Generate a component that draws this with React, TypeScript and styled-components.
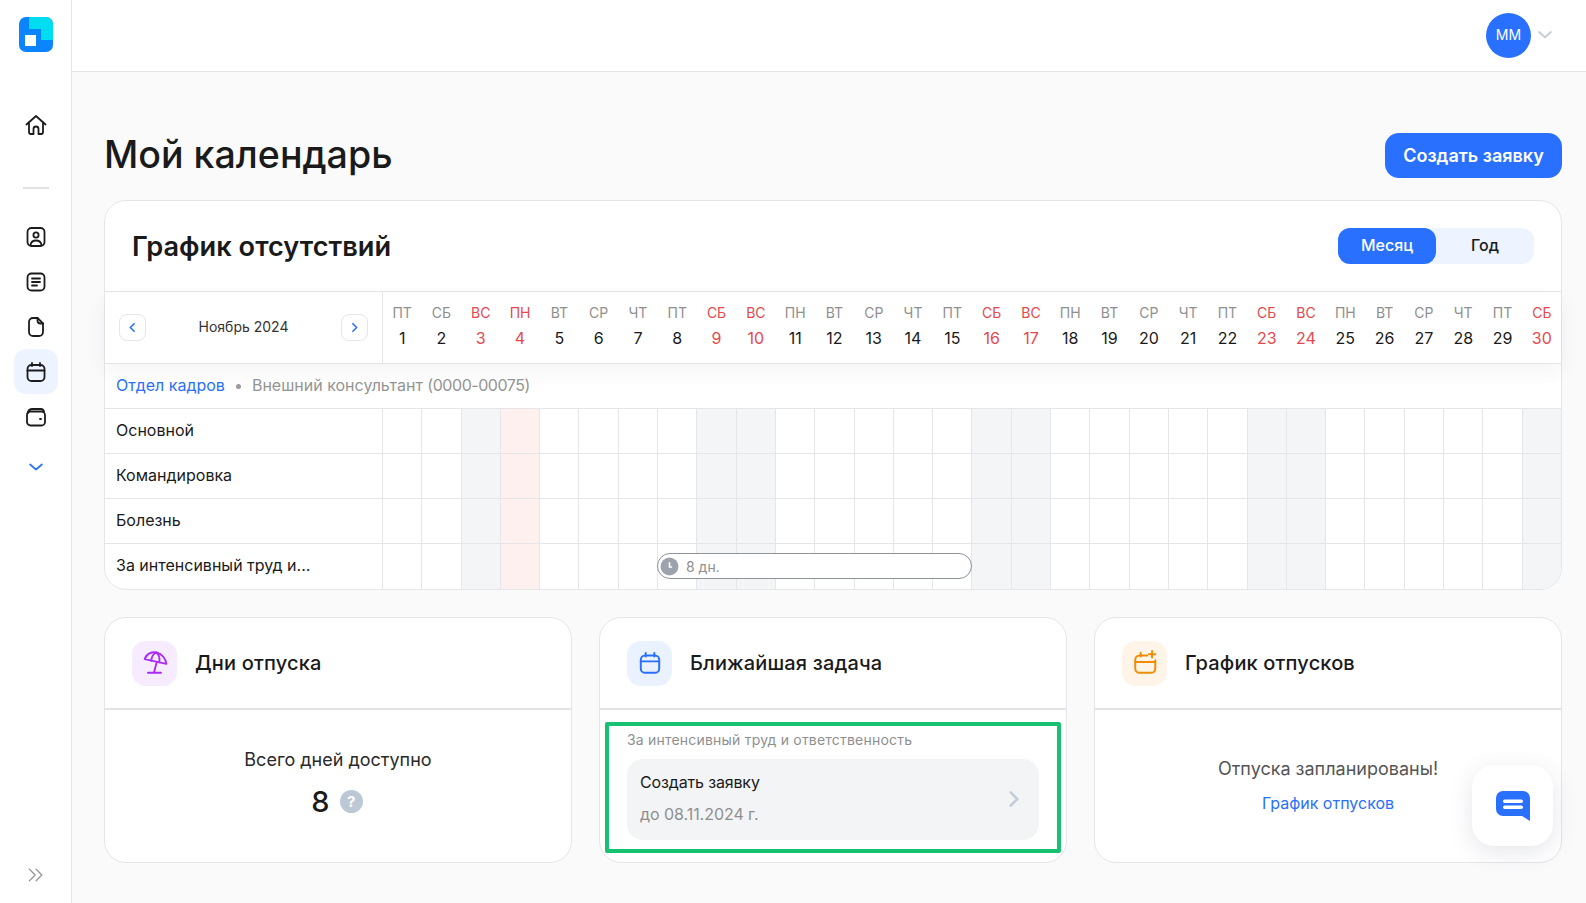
import React from "react";
import styled, { createGlobalStyle } from "styled-components";

const BLUE = "#2970ff";
const RED = "#e5484d";
const LINE = "#e4e6ea";

const GlobalStyle = createGlobalStyle`
  * { box-sizing: border-box; }
  html, body { margin: 0; padding: 0; height: 100%; }
  body {
    background: #fafafb;
    color: #1a1a1a;
    font-family: Inter, "Noto Sans", "Liberation Sans", sans-serif;
  }
`;

const WEEK = ["ПТ", "СБ", "ВС", "ПН", "ВТ", "СР", "ЧТ"];
const OFF_DAYS = [3, 9, 10, 16, 17, 23, 24, 30];
const DAYS = Array.from({ length: 30 }, (_, i) => ({
  n: i + 1,
  name: WEEK[i % 7],
  // 4 ноября праздник, выделен отдельным цветом
  kind: i + 1 === 4 ? "holiday" : OFF_DAYS.includes(i + 1) ? "weekend" : "work",
})) as { n: number; name: string; kind: "holiday" | "weekend" | "work" }[];

const ROWS = ["Основной", "Командировка", "Болезнь", "За интенсивный труд и..."];

function Icon({
  size = 24,
  weight = 1.8,
  children,
}: {
  size?: number;
  weight?: number;
  children: React.ReactNode;
}) {
  return (
    <svg
      width={size}
      height={size}
      viewBox="0 0 24 24"
      fill="none"
      stroke="currentColor"
      strokeWidth={weight}
      strokeLinecap="round"
      strokeLinejoin="round"
    >
      {children}
    </svg>
  );
}

const CalendarPaths = () => (
  <>
    <rect x="3.5" y="5" width="17" height="16" rx="4" />
    <path d="M3.5 10.5h17M8 2.8V6M16 2.8V6" />
  </>
);

export default function App() {
  return (
    <Shell>
      <GlobalStyle />
      <Sidebar>
        <Logo>
          <svg width="34" height="35" viewBox="0 0 34 35">
            <rect width="34" height="35" rx="7" fill="#0a84ff" />
            <path d="M10 0h17a7 7 0 0 1 7 7v16H22V12H10z" fill="#00dcf0" />
            <rect x="6" y="18" width="11" height="11" fill="#fff" />
          </svg>
        </Logo>
        <NavItem>
          <Icon>
            <path d="M2.5 11.5 12 3l9.5 8.5" />
            <path d="M5 9.5V19a2 2 0 0 0 2 2h2.5v-5a2.5 2.5 0 0 1 5 0v5H17a2 2 0 0 0 2-2V9.5" />
          </Icon>
        </NavItem>
        <NavDivider />
        <NavItem>
          <Icon>
            <rect x="3.5" y="3" width="17" height="18" rx="4" />
            <circle cx="12" cy="10" r="2.6" />
            <path d="M6.5 20c.5-3 2.6-4.5 5.5-4.5s5 1.5 5.5 4.5" />
          </Icon>
        </NavItem>
        <NavItem>
          <Icon>
            <rect x="3.5" y="3.5" width="17" height="17" rx="4" />
            <path d="M8 8.5h8M8 12h8M8 15.5h5" />
          </Icon>
        </NavItem>
        <NavItem>
          <Icon>
            <path d="M13.5 3H9a4 4 0 0 0-4 4v10a4 4 0 0 0 4 4h6a4 4 0 0 0 4-4V8.5z" />
            <path d="M13.5 3v2.5a3 3 0 0 0 3 3H19" />
          </Icon>
        </NavItem>
        <NavItem $active>
          <Icon>
            <CalendarPaths />
          </Icon>
        </NavItem>
        <NavItem>
          <Icon>
            <rect x="3" y="6.5" width="18" height="14" rx="3.5" />
            <path d="M3.5 8.5C4 5.5 6 4 8.5 4H17c1.500 0 2.500 1 3 2.500" />
            <path d="M16 14h1" />
          </Icon>
        </NavItem>
        <NavChevron>
          <Icon size={20} weight={2}>
            <path d="m5 9 7 6 7-6" />
          </Icon>
        </NavChevron>
        <Collapse>
          <Icon size={20} weight={1.5}>
            <path d="m4 5 7 7-7 7M12 5l7 7-7 7" />
          </Icon>
        </Collapse>
      </Sidebar>

      <Content>
        <TopBar>
          <Avatar>ММ</Avatar>
          <AvatarChevron>
            <Icon size={18} weight={2.4}>
              <path d="m4 8 8 7 8-7" />
            </Icon>
          </AvatarChevron>
        </TopBar>

        <Main>
          <TitleRow>
            <PageTitle>Мой календарь</PageTitle>
            <PrimaryButton type="button">Создать заявку</PrimaryButton>
          </TitleRow>

          <ScheduleCard>
            <ScheduleHeader>
              <ScheduleTitle>График отсутствий</ScheduleTitle>
              <Segment>
                <SegmentButton type="button" $active>
                  Месяц
                </SegmentButton>
                <SegmentButton type="button">Год</SegmentButton>
              </Segment>
            </ScheduleHeader>

            <DateRow>
              <MonthNav>
                <MonthButton type="button">
                  <Icon size={13} weight={3}>
                    <path d="m15 5-7 7 7 7" />
                  </Icon>
                </MonthButton>
                <MonthLabel>Ноябрь 2024</MonthLabel>
                <MonthButton type="button">
                  <Icon size={13} weight={3}>
                    <path d="m9 5 7 7-7 7" />
                  </Icon>
                </MonthButton>
              </MonthNav>
              {DAYS.map((d) => (
                <DayHead key={d.n} $red={d.kind !== "work"}>
                  <DayName>{d.name}</DayName>
                  <DayNum>{d.n}</DayNum>
                </DayHead>
              ))}
            </DateRow>

            <DeptRow>
              <DeptLink>Отдел кадров</DeptLink>
              <DeptDot />
              <DeptRole>
                Внешний консультант <DeptCode>(0000-00075)</DeptCode>
              </DeptRole>
            </DeptRow>

            {ROWS.map((label, i) => {
              const last = i === ROWS.length - 1;
              return (
                <GridRow key={label} $last={last}>
                  <RowLabel $last={last}>{label}</RowLabel>
                  {DAYS.map((d) => (
                    <DayCell key={d.n} $kind={d.kind} $corner={last && d.n === 30} />
                  ))}
                  {last && (
                    <VacationBar>
                      <svg width="19" height="19" viewBox="0 0 18 18">
                        <circle cx="9" cy="9" r="8.5" fill="#9ca3af" />
                        <path d="M9 5v4.500h2.500" fill="none" stroke="#fff" strokeWidth="1.5" />
                      </svg>
                      8 дн.
                    </VacationBar>
                  )}
                </GridRow>
              );
            })}
          </ScheduleCard>

          <BottomCards>
            <InfoCard>
              <InfoHeader>
                <IconBox $bg="#f7ebff" $color="#a92bf5">
                  <Icon size={26} weight={1.7}>
                    <path d="M2.5 8.500C4 3.500 9 1.300 13.500 2.300 18.500 3.500 22 8 22.500 12.800z" />
                    <path d="M8.500 10C8.800 6.500 10.500 3.500 13 2.300c2.500 1.700 3.500 5.700 3 9.200" />
                    <path d="M13.500 11.500 11 21M5.500 21h12" />
                  </Icon>
                </IconBox>
                <InfoTitle>Дни отпуска</InfoTitle>
              </InfoHeader>
              <VacationBody>
                <BodyText>Всего дней доступно</BodyText>
                <CountRow>
                  <Count>8</Count>
                  <HelpBadge>?</HelpBadge>
                </CountRow>
              </VacationBody>
            </InfoCard>

            <InfoCard>
              <InfoHeader>
                <IconBox $bg="#ebf2ff" $color={BLUE}>
                  <Icon size={26}>
                    <CalendarPaths />
                  </Icon>
                </IconBox>
                <InfoTitle>Ближайшая задача</InfoTitle>
              </InfoHeader>
              <TaskOutline>
                <TaskCaption>За интенсивный труд и ответственность</TaskCaption>
                <TaskBox>
                  <TaskText>
                    <TaskName>Создать заявку</TaskName>
                    <TaskDate>до 08.11.2024 г.</TaskDate>
                  </TaskText>
                  <TaskChevron>
                    <Icon size={20} weight={3}>
                      <path d="m8 4 8 8-8 8" />
                    </Icon>
                  </TaskChevron>
                </TaskBox>
              </TaskOutline>
            </InfoCard>

            <InfoCard>
              <InfoHeader>
                <IconBox $bg="#fff4e8" $color="#f08c00">
                  <Icon size={26}>
                    <path d="M21.500 9.500V17a4 4 0 0 1-4 4H7a4 4 0 0 1-4-4V9a4 4 0 0 1 4-4h7" />
                    <path d="M3 11h18.500M8 2.500V6M18.500 1v6M15.500 4h6" />
                  </Icon>
                </IconBox>
                <InfoTitle>График отпусков</InfoTitle>
              </InfoHeader>
              <PlannedBody>
                <PlannedText>Отпуска запланированы!</PlannedText>
                <PlannedLink>График отпусков</PlannedLink>
              </PlannedBody>
            </InfoCard>
          </BottomCards>
        </Main>
      </Content>

      <ChatButton type="button">
        <svg width="34" height="30" viewBox="0 0 34 30">
          <path d="M7 0h20a7 7 0 0 1 7 7v23l-8-5H7a7 7 0 0 1-7-7V7a7 7 0 0 1 7-7z" fill={BLUE} />
          <rect x="7" y="8.500" width="20" height="3.500" rx="1.700" fill="#fff" />
          <rect x="7" y="14.500" width="20" height="3.500" rx="1.700" fill="#fff" />
        </svg>
      </ChatButton>
    </Shell>
  );
}

const Shell = styled.div`
  display: flex;
  min-height: 903px;
`;

const Sidebar = styled.aside`
  position: relative;
  flex: 0 0 72px;
  display: flex;
  flex-direction: column;
  align-items: center;
  padding-top: 17px;
  background: #fff;
  border-right: 1px solid ${LINE};
`;

const Logo = styled.div`
  height: 35px;
  margin-bottom: 50px;
`;

const NavItem = styled.div<{ $active?: boolean }>`
  width: 44px;
  height: 45px;
  flex: none;
  display: flex;
  align-items: center;
  justify-content: center;
  border-radius: 12px;
  color: #1c1c1c;
  background: ${({ $active }) => ($active ? "#edf3ff" : "transparent")};
`;

const NavDivider = styled.div`
  width: 26px;
  height: 2px;
  margin-top: 40px;
  margin-bottom: 25px;
  background: #e2e2e4;
`;

const NavChevron = styled.div`
  height: 45px;
  display: flex;
  align-items: center;
  color: ${BLUE};
  margin-top: 5px;
`;

const Collapse = styled.div`
  position: absolute;
  bottom: 18px;
  left: 26px;
  height: 20px;
  color: #8f8f8f;
`;

const Content = styled.div`
  flex: 1;
  min-width: 0;
`;

const TopBar = styled.header`
  height: 72px;
  display: flex;
  align-items: center;
  justify-content: flex-end;
  padding: 0 32px 1px 0;
  background: #fff;
  border-bottom: 1px solid ${LINE};
`;

const Avatar = styled.div`
  width: 45px;
  height: 45px;
  display: flex;
  align-items: center;
  justify-content: center;
  padding-bottom: 2px;
  border-radius: 50%;
  background: ${BLUE};
  color: #fff;
  font-size: 14px;
  font-weight: 400;
`;

const AvatarChevron = styled.span`
  display: flex;
  margin-left: 5px;
  color: #c3ccd6;
`;

const Main = styled.main`
  padding: 61px 24px 0 32px;
`;

const TitleRow = styled.div`
  display: flex;
  align-items: center;
  justify-content: space-between;
  height: 45px;
  margin-bottom: 22px;
`;

const PageTitle = styled.h1`
  margin: 0 0 2px;
  font-size: 37.6px;
  font-weight: 550;
  color: #1a1a1a;
`;

const PrimaryButton = styled.button`
  width: 177px;
  height: 45px;
  border: 0;
  border-radius: 14px;
  background: ${BLUE};
  color: #fff;
  font: 600 18px Inter, sans-serif;
`;

const ScheduleCard = styled.section`
  background: #fff;
  border: 1px solid ${LINE};
  border-radius: 22px;
`;

const ScheduleHeader = styled.div`
  height: 91px;
  display: flex;
  align-items: center;
  justify-content: space-between;
  padding: 0 27px;
  border-bottom: 1px solid ${LINE};
`;

const ScheduleTitle = styled.h2`
  margin: 0;
  font-size: 27.2px;
  font-weight: 600;
  color: #1a1a1a;
`;

const Segment = styled.div`
  display: flex;
  width: 196px;
  height: 36px;
  border-radius: 12px;
  background: #edf3ff;
`;

const SegmentButton = styled.button<{ $active?: boolean }>`
  flex: 1;
  padding: 0 0 2px;
  border: 0;
  border-radius: 12px;
  background: ${({ $active }) => ($active ? BLUE : "transparent")};
  color: ${({ $active }) => ($active ? "#fff" : "#1a1a1a")};
  font: 500 16px Inter, sans-serif;
`;

const gridColumns = "277px repeat(30, 1fr)";

const DateRow = styled.div`
  display: grid;
  grid-template-columns: ${gridColumns};
  height: 72px;
  border-bottom: 1px solid ${LINE};
  box-shadow: 0 8px 20px rgba(30, 40, 60, 0.05);
`;

const MonthNav = styled.div`
  display: flex;
  align-items: center;
  justify-content: space-between;
  padding: 0 14px;
`;

const MonthButton = styled.button`
  width: 27px;
  height: 27px;
  display: flex;
  align-items: center;
  justify-content: center;
  padding: 0;
  background: #fff;
  border: 1px solid ${LINE};
  border-radius: 8px;
  color: ${BLUE};
`;

const MonthLabel = styled.span`
  margin-bottom: 2px;
  font-size: 14px;
  color: #333;
`;

const DayHead = styled.div<{ $red: boolean }>`
  display: flex;
  flex-direction: column;
  align-items: center;
  padding-top: 12px;
  border-left: 1px solid transparent;
  color: ${({ $red }) => ($red ? RED : "#1a1a1a")};
  &:nth-child(2) {
    border-left-color: ${LINE};
  }
  span:first-child {
    color: ${({ $red }) => ($red ? RED : "#8f8f8f")};
  }
`;

const DayName = styled.span`
  font-size: 14px;
  line-height: 18px;
`;

const DayNum = styled.span`
  margin-top: 7px;
  font-size: 16px;
  line-height: 18px;
`;

const DeptRow = styled.div`
  height: 45px;
  display: flex;
  align-items: center;
  padding: 0 11px 2px;
  font-size: 16px;
  border-bottom: 1px solid ${LINE};
`;

const DeptLink = styled.span`
  color: ${BLUE};
`;

const DeptDot = styled.span`
  width: 5px;
  height: 5px;
  margin: 2px 11px 0;
  border-radius: 50%;
  background: #9a9a9a;
`;

const DeptRole = styled.span`
  color: #949494;
`;

const DeptCode = styled.span`
  letter-spacing: -0.45px;
`;

const GridRow = styled.div<{ $last: boolean }>`
  position: relative;
  display: grid;
  grid-template-columns: ${gridColumns};
  height: 45px;
  border-bottom: ${({ $last }) => ($last ? "0" : `1px solid ${LINE}`)};
`;

const RowLabel = styled.div<{ $last: boolean }>`
  display: flex;
  align-items: center;
  padding: 0 0 ${({ $last }) => ($last ? 4 : 2)}px 11px;
  font-size: 16px;
  color: #1a1a1a;
`;

const DayCell = styled.div<{ $kind: string; $corner: boolean }>`
  border-left: 1px solid ${LINE};
  border-bottom-right-radius: ${({ $corner }) => ($corner ? "21px" : "0")};
  background: ${({ $kind }) =>
    $kind === "holiday" ? "#fdf0ee" : $kind === "weekend" ? "#f4f5f7" : "transparent"};
`;

const VacationBar = styled.div`
  position: absolute;
  top: 9px;
  left: 552px;
  width: 315px;
  height: 26px;
  display: flex;
  align-items: center;
  gap: 7px;
  padding-left: 2px;
  background: #fff;
  border: 1.5px solid #8d929b;
  border-radius: 13px;
  font-size: 14px;
  color: #8f8f8f;
`;

const BottomCards = styled.div`
  display: grid;
  grid-template-columns: repeat(3, 1fr);
  gap: 27px;
  margin-top: 27px;
`;

const InfoCard = styled.section`
  height: 246px;
  background: #fff;
  border: 1px solid ${LINE};
  border-radius: 22px;
`;

const InfoHeader = styled.div`
  height: 92px;
  display: flex;
  align-items: center;
  gap: 18px;
  padding: 0 27px;
  border-bottom: 2px solid #e3e3e5;
`;

const IconBox = styled.div<{ $bg: string; $color: string }>`
  width: 45px;
  height: 45px;
  display: flex;
  align-items: center;
  justify-content: center;
  border-radius: 14px;
  background: ${({ $bg }) => $bg};
  color: ${({ $color }) => $color};
`;

const InfoTitle = styled.h3`
  margin: 0;
  font-size: 20px;
  font-weight: 550;
  letter-spacing: 0.15px;
  color: #1a1a1a;
`;

const VacationBody = styled.div`
  display: flex;
  flex-direction: column;
  align-items: center;
  padding-top: 39px;
`;

const BodyText = styled.div`
  font-size: 18px;
  line-height: 22px;
  color: #2a2a2a;
`;

const CountRow = styled.div`
  display: flex;
  align-items: center;
  gap: 10px;
  margin: 14px 2px 0 0;
  height: 32px;
`;

const Count = styled.span`
  font-size: 29px;
  font-weight: 500;
  color: #1a1a1a;
`;

const HelpBadge = styled.span`
  width: 23px;
  height: 23px;
  display: flex;
  align-items: center;
  justify-content: center;
  border-radius: 50%;
  background: #bcc8d6;
  color: #fff;
  font-size: 15px;
  font-weight: 700;
`;

const TaskOutline = styled.div`
  margin: 12px 5px 0;
  height: 131px;
  padding: 4px 18px 0;
  border: 4px solid #17c172;
  border-radius: 2px;
`;

const TaskCaption = styled.div`
  font-size: 14px;
  line-height: 20px;
  letter-spacing: 0.2px;
  color: #8f8f8f;
`;

const TaskBox = styled.div`
  display: flex;
  align-items: center;
  justify-content: space-between;
  height: 81px;
  margin-top: 9px;
  padding: 0 15px 0 13px;
  background: #f3f4f6;
  border-radius: 16px;
`;

const TaskText = styled.div`
  margin-bottom: 3px;
`;

const TaskName = styled.div`
  font-size: 16px;
  line-height: 20px;
  letter-spacing: -0.15px;
  color: #1a1a1a;
`;

const TaskDate = styled.div`
  margin-top: 12px;
  font-size: 16px;
  line-height: 20px;
  letter-spacing: -0.05px;
  color: #8f8f8f;
`;

const TaskChevron = styled.span`
  display: flex;
  margin-bottom: 2px;
  color: #c3ccd6;
`;

const PlannedBody = styled.div`
  display: flex;
  flex-direction: column;
  align-items: center;
  padding-top: 48px;
`;

const PlannedText = styled.div`
  font-size: 18px;
  line-height: 22px;
  color: #555;
`;

const PlannedLink = styled.div`
  margin-top: 13px;
  font-size: 16px;
  line-height: 20px;
  color: ${BLUE};
`;

const ChatButton = styled.button`
  position: fixed;
  left: 1472px;
  top: 765px;
  width: 81px;
  height: 81px;
  display: flex;
  align-items: center;
  justify-content: center;
  padding: 0;
  border: 0;
  border-radius: 22px;
  background: #fff;
  box-shadow: 0 6px 24px rgba(40, 50, 80, 0.12);
`;
